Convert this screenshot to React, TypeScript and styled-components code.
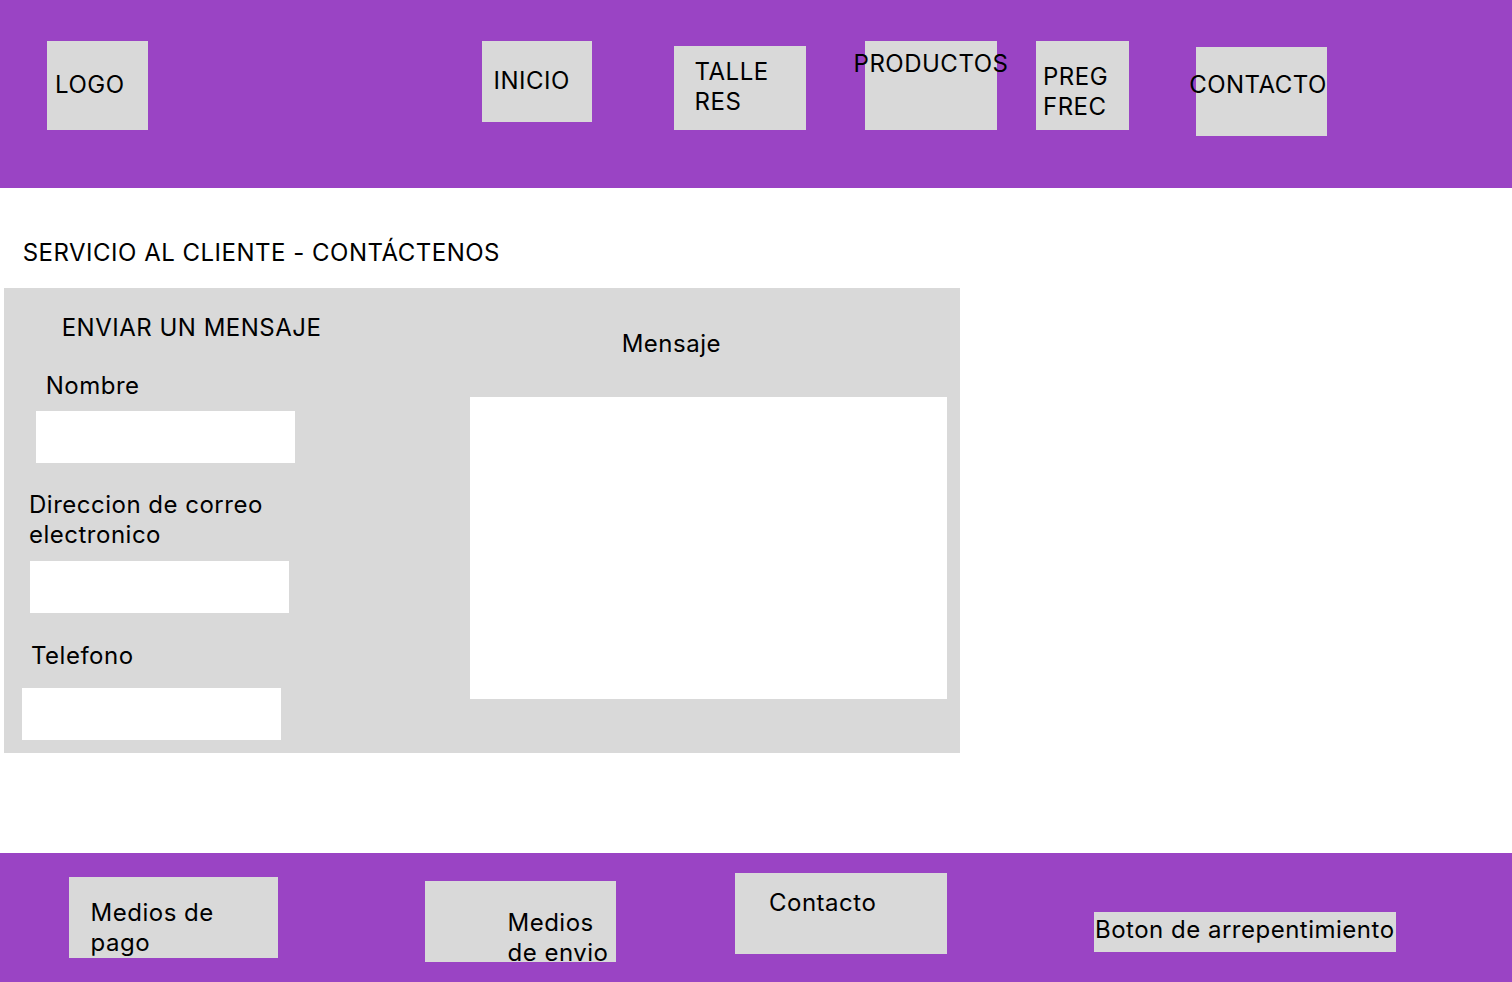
import React from "react";
import styled, { createGlobalStyle } from "styled-components";

const GlobalStyle = createGlobalStyle`
  html, body {
    margin: 0;
    padding: 0;
    background: #ffffff;
  }
  body {
    font-family: Inter, "Noto Sans", sans-serif;
    font-size: 24px;
    line-height: 30px;
    letter-spacing: 0.5px;
    color: #000000;
  }
  * { box-sizing: border-box; }
`;

const PURPLE = "#9a44c4";
const GRAY = "#d9d9d9";

const Page = styled.div`
  width: 1512px;
  height: 982px;
  display: flex;
  flex-direction: column;
  overflow: hidden;
`;

const Header = styled.header`
  flex: 0 0 188px;
  background: ${PURPLE};
  display: flex;
  align-items: flex-start;
`;

const Footer = styled.footer`
  flex: 0 0 129px;
  background: ${PURPLE};
  display: flex;
  align-items: flex-start;
`;

type BoxProps = {
  $w: number;
  $h: number;
  $top: number;
  $gap: number;
  $pl?: number;
  $pt: number;
  $justify?: string;
};

const Tile = styled.a<BoxProps>`
  flex: 0 0 ${(p) => p.$w}px;
  width: ${(p) => p.$w}px;
  height: ${(p) => p.$h}px;
  margin-top: ${(p) => p.$top}px;
  margin-left: ${(p) => p.$gap}px;
  padding-left: ${(p) => p.$pl ?? 0}px;
  padding-top: ${(p) => p.$pt}px;
  background: ${GRAY};
  display: flex;
  justify-content: ${(p) => p.$justify ?? "flex-start"};
  align-items: flex-start;
  color: #000;
  text-decoration: none;
  cursor: pointer;
`;

const TileText = styled.span`
  white-space: nowrap;
  flex-shrink: 0;
  font-size: 24px;
  line-height: 30px;
  letter-spacing: 0.5px;
`;

const Main = styled.main`
  flex: 1 1 auto;
  padding: 50px 0 0 4px;
  display: flex;
  flex-direction: column;
  align-items: flex-start;
`;

const Title = styled.h1`
  margin: 0 0 0 18.7px;
  font-size: 24px;
  line-height: 30px;
  font-weight: 400;
  letter-spacing: 0.5px;
`;

const Panel = styled.section`
  margin-top: 20px;
  width: 956px;
  height: 465px;
  background: ${GRAY};
  display: flex;
  align-items: flex-start;
`;

const FormColumn = styled.div`
  flex: 0 0 466px;
  padding-top: 25px;
  display: flex;
  flex-direction: column;
  align-items: flex-start;
`;

const MessageColumn = styled.div`
  flex: 0 0 477px;
  padding-top: 40.5px;
  display: flex;
  flex-direction: column;
  align-items: flex-start;
`;

const Heading = styled.h2<{ $ml: number }>`
  margin: 0 0 0 ${(p) => p.$ml}px;
  font-size: 24px;
  line-height: 30px;
  font-weight: 400;
  letter-spacing: 0.5px;
`;

const FieldLabel = styled.label<{ $ml: number; $mt: number }>`
  display: block;
  margin: ${(p) => p.$mt}px 0 0 ${(p) => p.$ml}px;
  font-size: 24px;
  line-height: 30px;
`;

const TextField = styled.input<{ $ml: number; $mt: number }>`
  display: block;
  width: 259px;
  height: 52px;
  margin: ${(p) => p.$mt}px 0 0 ${(p) => p.$ml}px;
  border: none;
  padding: 0 8px;
  background: #ffffff;
  font-family: Inter, sans-serif;
  font-size: 18px;
  outline: none;
`;

const MessageArea = styled.textarea`
  display: block;
  width: 477px;
  height: 302px;
  margin-top: 38.5px;
  border: none;
  padding: 8px;
  background: #ffffff;
  resize: none;
  font-family: Inter, sans-serif;
  font-size: 18px;
  outline: none;
`;

export default function App() {
  return (
    <>
      <GlobalStyle />
      <Page>
        <Header>
          <Tile $w={101} $h={89} $top={41} $gap={47} $pl={8} $pt={28.5}>
            <TileText>LOGO</TileText>
          </Tile>
          <Tile $w={110} $h={81} $top={41} $gap={334} $pl={11.5} $pt={25}>
            <TileText>INICIO</TileText>
          </Tile>
          <Tile $w={131.6} $h={84} $top={46} $gap={82.3} $pl={20.3} $pt={11}>
            <TileText>
              TALLE
              <br />
              RES
            </TileText>
          </Tile>
          <Tile $w={132} $h={89} $top={41} $gap={59.1} $pt={8} $justify="center">
            <TileText>PRODUCTOS</TileText>
          </Tile>
          <Tile $w={93.5} $h={89} $top={41} $gap={39} $pl={7} $pt={20.8}>
            <TileText>
              PREG
              <br />
              FREC
            </TileText>
          </Tile>
          <Tile $w={131} $h={89} $top={47} $gap={66.5} $pt={23} $justify="flex-end">
            <TileText>CONTACTO</TileText>
          </Tile>
        </Header>

        <Main>
          <Title>SERVICIO AL CLIENTE - CONTÁCTENOS</Title>
          <Panel>
            <FormColumn>
              <Heading $ml={57.7}>ENVIAR UN MENSAJE</Heading>
              <FieldLabel $ml={41.7} $mt={27.7} htmlFor="nombre">
                Nombre
              </FieldLabel>
              <TextField id="nombre" type="text" $ml={32} $mt={10.3} />
              <FieldLabel $ml={25} $mt={27.2} htmlFor="correo">
                Direccion de correo
                <br />
                electronico
              </FieldLabel>
              <TextField id="correo" type="email" $ml={26} $mt={10.8} />
              <FieldLabel $ml={27} $mt={28.4} htmlFor="telefono">
                Telefono
              </FieldLabel>
              <TextField id="telefono" type="tel" $ml={18} $mt={16.6} />
            </FormColumn>
            <MessageColumn>
              <Heading as="label" htmlFor="mensaje" $ml={151.7}>
                Mensaje
              </Heading>
              <MessageArea id="mensaje" />
            </MessageColumn>
          </Panel>
        </Main>

        <Footer>
          <Tile $w={209} $h={81} $top={24} $gap={69} $pl={21.6} $pt={20.5}>
            <TileText>
              Medios de
              <br />
              pago
            </TileText>
          </Tile>
          <Tile $w={191} $h={81} $top={28} $gap={147} $pl={82.5} $pt={26.5}>
            <TileText>
              Medios
              <br />
              de envio
            </TileText>
          </Tile>
          <Tile $w={212} $h={81} $top={20} $gap={119} $pl={34} $pt={14.8}>
            <TileText>Contacto</TileText>
          </Tile>
          <Tile $w={302} $h={40} $top={59} $gap={147} $pl={1} $pt={3.4}>
            <TileText>Boton de arrepentimiento</TileText>
          </Tile>
        </Footer>
      </Page>
    </>
  );
}
